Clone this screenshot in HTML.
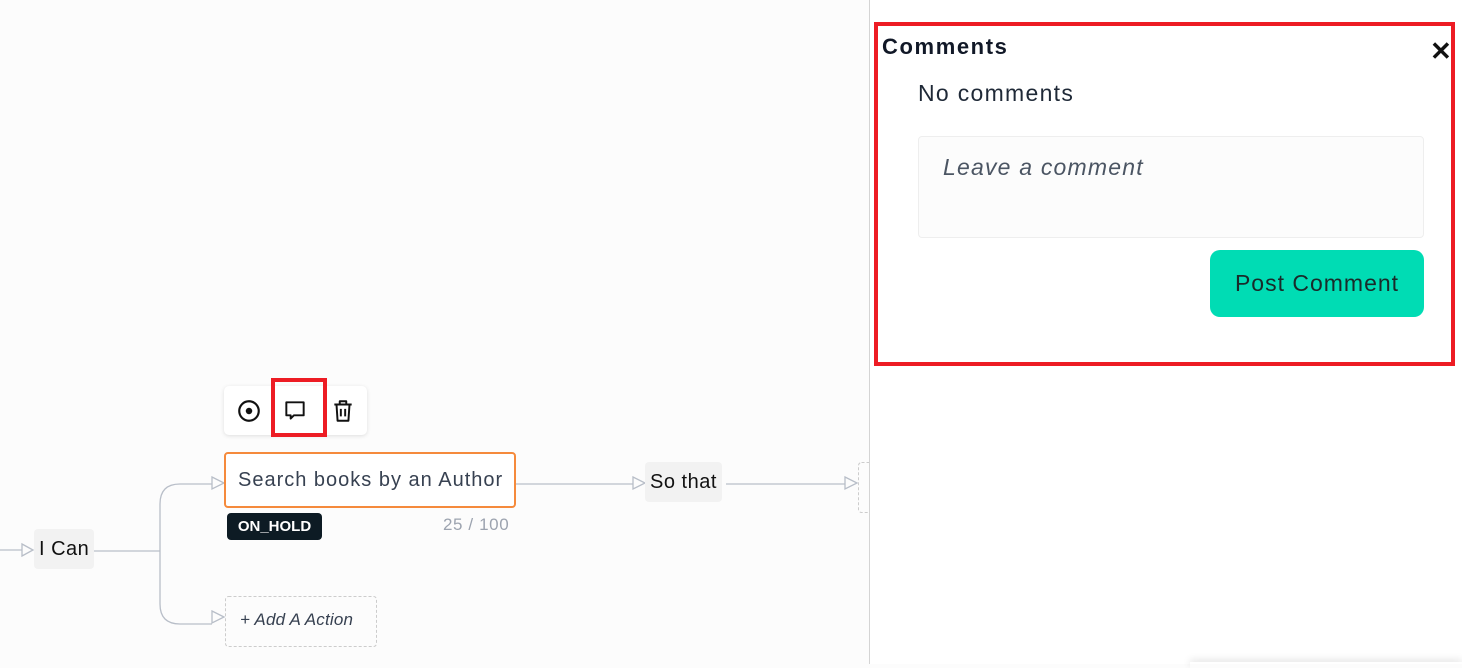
<!DOCTYPE html>
<html><head><style>
*{box-sizing:border-box;margin:0;padding:0}
body{width:1462px;height:664px;overflow:hidden;background:#fcfcfc;font-family:"Liberation Sans",sans-serif;position:relative;color:#111827}
.a{position:absolute}
.node{position:absolute;background:#f2f2f2;border-radius:4px;font-size:20px;color:#111;padding:0 5px;line-height:40px;letter-spacing:.5px}
</style></head><body>
<svg class="a" style="left:0;top:0" width="870" height="664">
<g fill="none" stroke="#b8bec8" stroke-width="1.3">
<path d="M0 550H22"/><path d="M94 551H160"/>
<path d="M212 484H180Q160 484 160 504V604Q160 624 180 624H212"/>
<path d="M515 484H633"/><path d="M726 484H845"/>
<path d="M22 544L33 550L22 556Z"/>
<path d="M212 477L224 483L212 489Z"/>
<path d="M212 611L224 617L212 623Z"/>
<path d="M633 477L645 483L633 489Z"/>
<path d="M845 477L857 483L845 489Z"/>
</g>
<rect x="858.5" y="462.5" width="20" height="50" rx="3" fill="none" stroke="#ccc" stroke-dasharray="3 2"/>
<rect x="225.5" y="596.5" width="151" height="50" rx="3" fill="none" stroke="#ccc" stroke-dasharray="3 2"/>
</svg>
<div class="node" style="left:34px;top:529px">I Can</div>
<div class="node" style="left:645px;top:462px">So that</div>
<div class="a" style="left:224px;top:386px;width:143px;height:49px;background:#fff;border-radius:5px;box-shadow:0 1px 4px rgba(0,0,0,.12)"></div>
<svg class="a" style="left:236px;top:398px" width="26" height="26" viewBox="0 0 24 24"><circle cx="12" cy="12" r="9" fill="none" stroke="#111" stroke-width="2"/><circle cx="12" cy="12" r="3" fill="#111"/></svg>
<svg class="a" style="left:282px;top:398px" width="26" height="26" viewBox="0 0 24 24"><path d="M4 4H20V16H11L8 19V16H4Z" fill="none" stroke="#111" stroke-width="1.8" stroke-linejoin="round"/></svg>
<svg class="a" style="left:330px;top:398px" width="26" height="26" viewBox="0 0 24 24"><path d="M4 6H20M9 6V3H15V6M6 6L7 21H17L18 6M10 10V17M14 10V17" fill="none" stroke="#111" stroke-width="1.8" stroke-linejoin="round"/></svg>
<div class="a" style="left:271px;top:378px;width:56px;height:59px;border:4px solid #ed1c24"></div>
<div class="a" style="left:224px;top:452px;width:292px;height:56px;border:2px solid #f58a3c;border-radius:4px;background:#fff;font-size:20px;color:#374151;line-height:52px;padding-left:12px;letter-spacing:1px;white-space:nowrap">Search books by an Author</div>
<div class="a" style="left:227px;top:513px;width:95px;height:27px;background:#0d1b24;border-radius:4px;color:#fff;font-weight:bold;font-size:15px;line-height:27px;text-align:center">ON_HOLD</div>
<div class="a" style="left:443px;top:515px;font-size:17px;color:#9ca3af;letter-spacing:.6px">25 / 100</div>
<div class="a" style="left:240px;top:610px;font-size:17px;color:#374151;font-style:italic;letter-spacing:.2px">+ Add A Action</div>
<div class="a" style="left:869px;top:0;width:593px;height:664px;background:#fff;border-left:1px solid #d4d4d4"></div>
<div class="a" style="left:1190px;top:662px;width:272px;height:6px;box-shadow:0 -2px 8px rgba(0,0,0,.12)"></div>
<div class="a" style="left:874px;top:22px;width:581px;height:344px;border:4px solid #ed1c24"></div>
<div class="a" style="left:882px;top:34px;font-size:22px;font-weight:bold;color:#111827;letter-spacing:1.6px">Comments</div>
<div class="a" style="left:1430px;top:36px;font-size:26px;font-weight:bold;color:#111">✕</div>
<div class="a" style="left:918px;top:80px;font-size:23px;color:#1f2937;letter-spacing:1.3px">No comments</div>
<div class="a" style="left:918px;top:136px;width:506px;height:102px;border:1px solid #eee;border-radius:4px;background:#fcfcfc"></div>
<div class="a" style="left:943px;top:154px;font-size:23px;font-style:italic;color:#4b5563;letter-spacing:1.2px">Leave a comment</div>
<div class="a" style="left:1210px;top:250px;width:214px;height:67px;background:#00dcb4;border-radius:10px;font-size:23px;color:#1a2a2a;text-align:center;line-height:67px;letter-spacing:1px">Post Comment</div>
</body></html>
